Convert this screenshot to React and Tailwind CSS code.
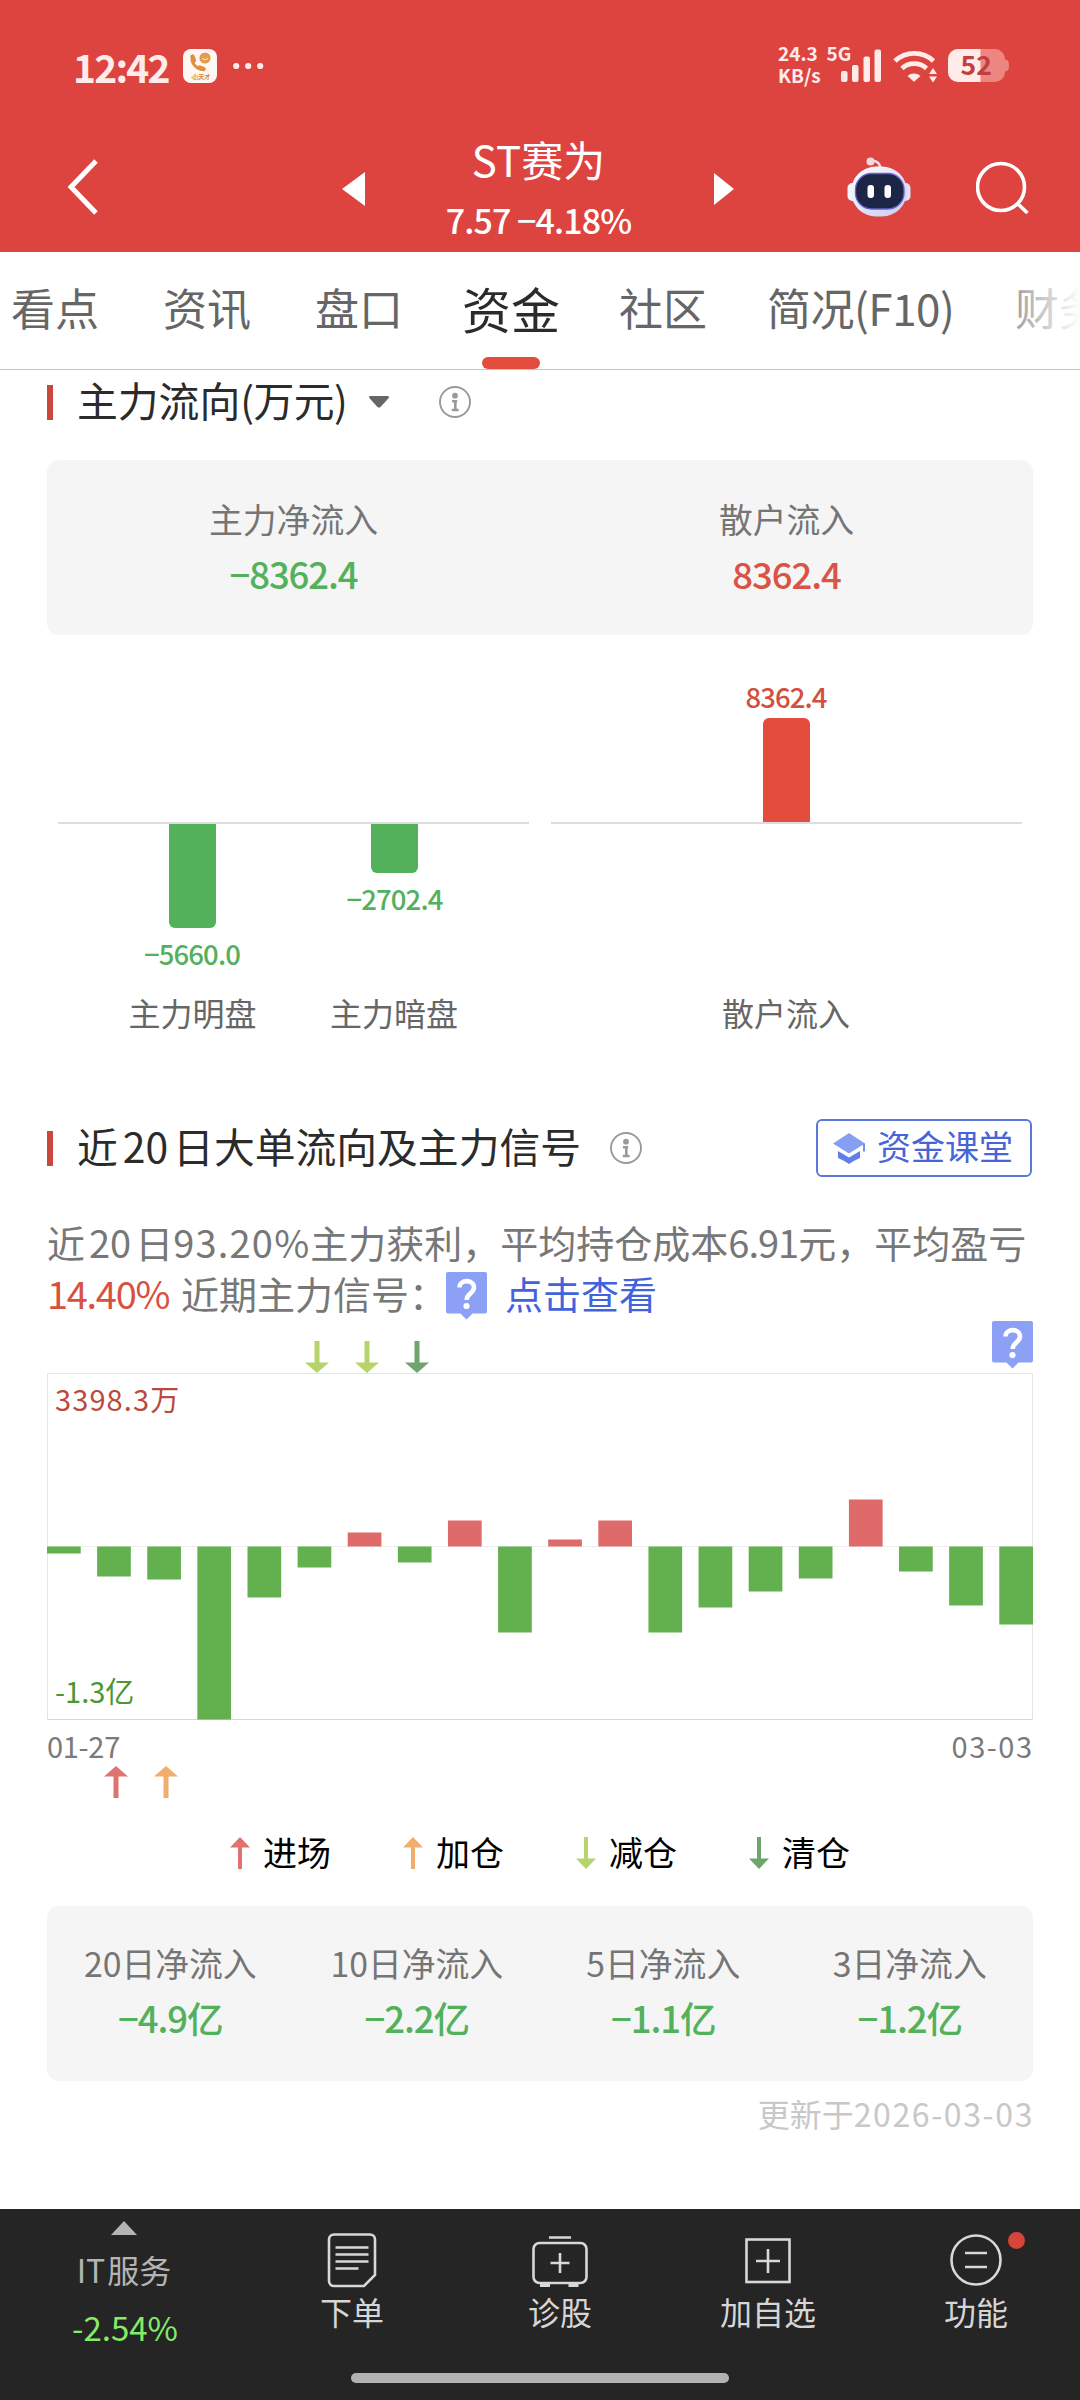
const GREEN = '#53b15c';
const RED = '#e44c3e';

const tabs = [
  { label: '看点', className: 'w-[88px]' },
  { label: '资讯', className: 'ml-16 w-[88px]' },
  { label: '盘口', className: 'ml-16 w-[88px]' },
  { label: '资金', className: 'ml-[59px] w-[98px] text-[49px] text-[#2b2b2b]' },
  { label: '社区', className: 'ml-[59px] w-[88px]' },
  { label: '简况(F10)', className: 'ml-[60px] w-[188px] tracking-[-0.5px]' },
  { label: '财务', className: 'ml-[60px] w-[88px]' },
];

// bar height in px from the zero line, positive means inflow
const dailyFlow = [-7, -30, -33, -173, -51, -21, 14, -16, 26, -86, 7, 26, -86, -61, -45, -32, 47, -25, -59, -78];

const signals = [
  { x: 317, y: 23, color: '#b7d46c', down: true },
  { x: 367, y: 23, color: '#b7d46c', down: true },
  { x: 417, y: 23, color: '#6fa56c', down: true },
  { x: 116, y: 448, color: '#e0736f' },
  { x: 166, y: 448, color: '#f0ad6c' },
];

const legend = [
  { label: '进场', color: '#e0736f' },
  { label: '加仓', color: '#f0ad6c' },
  { label: '减仓', color: '#b7d46c', down: true },
  { label: '清仓', color: '#6fa56c', down: true },
];

const periods = [
  { label: '20日净流入', value: '−4.9亿' },
  { label: '10日净流入', value: '−2.2亿' },
  { label: '5日净流入', value: '−1.1亿' },
  { label: '3日净流入', value: '−1.2亿' },
];

function StatusBar() {
  return (
    <div className="flex h-[132px] items-center pl-[73px] text-[#ffecea]">
      <span className="w-[97px] text-[39px] leading-none font-bold tracking-[-1.8px] whitespace-nowrap">12:42</span>
      <svg className="ml-[13px]" width="34" height="34" viewBox="0 0 34 34">
        <rect width="34" height="34" rx="8" fill="#fdf8f4" />
        <circle cx="22" cy="9" r="5.6" fill="#e59a4c" />
        <path d="M19 9.5q3 2.5 6 0" stroke="#fff" strokeWidth="0.8" fill="none" />
        <path d="M9.5 7.5c-2 5 3 13 11 13" stroke="#e08f40" strokeWidth="3" fill="none" strokeLinecap="round" />
        <path d="M9.5 7.5l1.4 4M16.5 18.5l4 1.5" stroke="#e08f40" strokeWidth="4.4" strokeLinecap="round" />
        <text x="9" y="29.5" fontSize="6.2" fontWeight="700" fill="#d98b3c">小天才</text>
        <path d="M8 28q4 4.5 9 1.5" stroke="#e0a060" strokeWidth="0.7" fill="none" />
      </svg>
      <svg className="ml-4" width="32" height="8" viewBox="0 0 32 8" fill="currentColor">
        <circle cx="3.2" cy="4" r="3.1" />
        <circle cx="15.2" cy="4" r="3.1" />
        <circle cx="27.2" cy="4" r="3.1" />
      </svg>
      <div className="ml-[513px] w-[47px] pb-[5px] text-[19px] leading-[22px] font-bold whitespace-nowrap">
        <div>24.3</div>
        <div>KB/s</div>
      </div>
      <svg className="overflow-visible" width="185" height="42" viewBox="825 45 185 42" fill="currentColor">
        <text x="826.5" y="61" fontSize="19" fontWeight="700">5G</text>
        <rect x="841" y="71" width="6.5" height="11" rx="2" />
        <rect x="852" y="65" width="6.5" height="17" rx="2" />
        <rect x="863.5" y="56.5" width="6.5" height="25.5" rx="2" />
        <rect x="874.5" y="49.5" width="6.5" height="32.5" rx="2" />
        <g fill="none" stroke="currentColor" strokeWidth="4.8">
          <path d="M895 61a28 28 0 0 1 38.500 0" />
          <path d="M902 68.500a18 18 0 0 1 24.500 0" />
        </g>
        <path d="M907.500 76a10 10 0 0 1 13 0l-6.500 5.800z" />
        <path d="M929 74l4-6 4 6zM929 76.500l4 6 4-6z" />
        <rect x="948" y="49" width="57" height="33" rx="10" fill="#ed8680" />
        <path d="M1004 59.500c3 0 5 1 5 6s-2 6-5 6z" fill="#ed8680" />
        <path d="M958 49h22.500v33H958a10 10 0 0 1-10-10V59a10 10 0 0 1 10-10z" />
        <text x="960.5" y="75" fontSize="26.5" fontWeight="700" fill="#c0403d">52</text>
      </svg>
    </div>
  );
}

function Robot() {
  return (
    <svg className="ml-[113px]" width="64" height="60" viewBox="0 0 64 60">
      <defs>
        <linearGradient id="shell" x1="0" y1="0" x2="1" y2="1">
          <stop offset="0" stopColor="#ffffff" />
          <stop offset="1" stopColor="#c4cbf0" />
        </linearGradient>
      </defs>
      <path d="M23 4.5c6-1.5 10 1 10.500 7" stroke="#f6dce4" strokeWidth="2.4" fill="none" />
      <circle cx="23.5" cy="4.5" r="4" fill="#f4d6de" />
      <rect x="0.5" y="26" width="11" height="18" rx="5" fill="#f4f4fc" />
      <rect x="52.5" y="26" width="11" height="18" rx="5" fill="#dfe1f6" />
      <rect x="4" y="9.5" width="56" height="50" rx="25" fill="url(#shell)" />
      <rect x="8.5" y="16.5" width="48.5" height="35.5" rx="16" fill="#1d2546" stroke="#6a5fd0" strokeWidth="1.3" />
      <rect x="20.5" y="28" width="6.5" height="13" rx="3" fill="#fff" />
      <rect x="37.5" y="28" width="6.5" height="13" rx="3" fill="#fff" />
    </svg>
  );
}

function TitleBar() {
  return (
    <div className="flex h-[110px] items-center pl-[67px] text-white">
      <svg width="31" height="56" viewBox="0 0 31 56" fill="none" stroke="currentColor" strokeWidth="5">
        <path d="M29 2L4 28l25 26" />
      </svg>
      <svg className="ml-[244px] mt-1" width="23" height="34" viewBox="0 0 23 34" fill="currentColor">
        <path d="M23 0v34L0 17z" />
      </svg>
      <div className="w-[349px] pr-0.5 text-center">
        <div className="text-[42px] leading-[54px]">ST赛为</div>
        <div className="mt-3 text-[34px] leading-[44px] font-medium tracking-[-0.9px]">7.57 −4.18%</div>
      </div>
      <svg className="mt-1" width="20" height="32" viewBox="0 0 20 32" fill="currentColor">
        <path d="M0 0v32l20-16z" />
      </svg>
      <Robot />
      <svg className="ml-[65px]" width="53" height="53" viewBox="0 0 53 53" fill="none" stroke="currentColor" strokeWidth="3.6">
        <circle cx="25" cy="26" r="23.5" />
        <path d="M41.500 42.500l10 9.500" />
      </svg>
    </div>
  );
}

function Tabs() {
  return (
    <nav className="relative flex h-[118px] items-center overflow-hidden border-b border-[#c6c4c4] pb-[7px] pl-[11px] text-[44px] leading-none text-[#666]">
      {tabs.map((tab) => (
        <div key={tab.label} className={`shrink-0 whitespace-nowrap ${tab.className}`}>
          {tab.label}
        </div>
      ))}
      <div className="absolute bottom-0 left-[482px] h-3 w-[58px] rounded-full bg-[#e44c3e]" />
      <div className="absolute top-0 right-0 h-full w-[84px] bg-linear-to-r from-white/20 to-white" />
    </nav>
  );
}

function InfoIcon({ className }) {
  return (
    <svg className={className} width="32" height="32" viewBox="0 0 32 32">
      <circle cx="16" cy="16" r="15" fill="none" stroke="#999" strokeWidth="1.9" />
      <circle cx="16" cy="9.7" r="2.9" fill="#999" />
      <path d="M13 15.2h5.200M16.300 15v9M12.800 24h6.800" stroke="#999" strokeWidth="2.6" fill="none" />
    </svg>
  );
}

function SectionTitle({ children }) {
  return (
    <>
      <div className="h-[35px] w-1.5 bg-[#c8483e]" />
      <h2 className="-mt-1 ml-6 text-[40.8px] leading-none whitespace-nowrap text-[#2b2b2b]">{children}</h2>
    </>
  );
}

function Arrow({ x = 0, y = 0, color, down, width = 24 }) {
  const h = width / 2;
  return (
    <g transform={down ? `translate(${x} ${y + 32}) scale(1 -1)` : `translate(${x} ${y})`}>
      <path d={`M0 0L${h} 10.500H${-h}z`} fill={color} />
      <rect x={width > 20 ? -2.5 : -2} y="10" width={width > 20 ? 5 : 4} height="22" fill={color} />
    </g>
  );
}

function MainFlowChart() {
  return (
    <svg className="block" width="1080" height="405" viewBox="0 635 1080 405">
      <path d="M58 823h471M551 823h471" stroke="#dcdcdc" strokeWidth="2" />
      <path d="M169 824h47v98a6 6 0 0 1-6 6h-35a6 6 0 0 1-6-6z" fill={GREEN} />
      <path d="M371 824h47v43a6 6 0 0 1-6 6h-35a6 6 0 0 1-6-6z" fill={GREEN} />
      <path d="M763 822h47v-98a6 6 0 0 0-6-6h-35a6 6 0 0 0-6 6z" fill={RED} />
      <g textAnchor="middle" fontSize="27.5" fontWeight="500" letterSpacing="-0.9">
        <text x="192" y="965" fill={GREEN}>−5660.0</text>
        <text x="394.5" y="910" fill={GREEN}>−2702.4</text>
        <text x="786" y="708" fill="#d2503f">8362.4</text>
      </g>
      <g textAnchor="middle" fontSize="32" fill="#666">
        <text x="192.5" y="1026">主力明盘</text>
        <text x="394" y="1026">主力暗盘</text>
        <text x="786" y="1026">散户流入</text>
      </g>
    </svg>
  );
}

function HelpBubble() {
  return (
    <g>
      <path d="M2 0h37a2 2 0 0 1 2 2v37.500a2 2 0 0 1-2 2H26.500l-6 6-6-6H2a2 2 0 0 1-2-2V2a2 2 0 0 1 2-2z" fill="#8ca1f6" />
      <path d="M13.500 15.500c0-8.500 14.500-8.500 14.500 0 0 5.500-7.300 6-7.300 12.500" stroke="#fff" strokeWidth="4.6" fill="none" />
      <circle cx="20.5" cy="34" r="3.1" fill="#fff" />
    </g>
  );
}

function SignalChart() {
  return (
    <svg className="block" width="1080" height="482" viewBox="0 0 1080 482">
      <path d="M47.500 401V55.500h985V401" fill="none" stroke="#e6e6e6" />
      <path d="M47 228.500h986" stroke="#eee" />
      <path d="M47 401.500h986" stroke="#d6d6d6" />
      {dailyFlow.map((v, i) => (
        <rect
          key={i}
          x={47 + i * 50.12}
          y={v > 0 ? 228.5 - v : 228.5}
          width="33.7"
          height={Math.abs(v)}
          fill={v > 0 ? '#de6b69' : '#63b04f'}
        />
      ))}
      {signals.map((s) => (
        <Arrow key={s.x} {...s} />
      ))}
      <g transform="translate(992 3)">
        <HelpBubble />
      </g>
      <g fontSize="29">
        <text x="55" y="93" fill="#ba4940" letterSpacing="1.1">3398.3万</text>
        <text x="55" y="384.5" fill="#4a9735">-1.3亿</text>
        <text x="47" y="440" fill="#7a7a7a" letterSpacing="-0.3">01-27</text>
        <text x="1033.5" y="440" fill="#7a7a7a" textAnchor="end" letterSpacing="1.5">03-03</text>
      </g>
    </svg>
  );
}

function Stat({ label, value, className = 'text-[#53b15c]' }) {
  return (
    <div className="flex-1 text-center whitespace-nowrap">
      <div className="text-[33.8px] leading-[44px] text-[#757575]">{label}</div>
      <div className={`mt-[11px] text-[36.5px] leading-[44px] font-medium tracking-[-1.1px] ${className}`}>{value}</div>
    </div>
  );
}

function NavItem({ label, children }) {
  return (
    <div className="flex w-52 flex-col items-center pt-[22px]">
      <svg width="100" height="60" viewBox="0 0 100 60" fill="none" stroke="#d8d8d8" strokeWidth="2.6">
        {children}
      </svg>
      <div className="text-[32px] leading-[40px] text-[#d6d6d6]">{label}</div>
    </div>
  );
}

function BottomNav() {
  return (
    <footer className="relative mt-auto flex h-[191px] bg-[#252525]">
      <div className="w-[248px] pt-3 text-center">
        <svg className="ml-[111px] block" width="26" height="14" viewBox="0 0 26 14">
          <path d="M13 0l13 14H0z" fill="#b4b4b4" />
        </svg>
        <div className="mt-[14px] text-[32px] leading-[40px] text-[#b4b4b4]">
          IT<span className="ml-0.5">服务</span>
        </div>
        <div className="mt-[18px] pl-0.5 text-[33px] leading-[40px] text-[#84ec66]">-2.54%</div>
      </div>
      <NavItem label="下单">
        <path d="M32 3.500h36a5 5 0 0 1 5 5V44L62 55H32a5 5 0 0 1-5-5V8.500a5 5 0 0 1 5-5z" />
        <path d="M33.500 16.500h33M33.500 23.500h33M33.500 30.500h33M33.500 37.500h23" />
      </NavItem>
      <NavItem label="诊股">
        <path d="M39 6.500h22M50 22v20M40.500 32h19" />
        <rect x="23.5" y="12" width="53" height="40" rx="6" />
        <path d="M30 54h10M58.500 54h10" strokeWidth="4" />
      </NavItem>
      <NavItem label="加自选">
        <rect x="28.5" y="8.5" width="43" height="42.5" />
        <path d="M50 18v24M38 30h24" />
      </NavItem>
      <NavItem label="功能">
        <circle cx="50" cy="29" r="24.5" />
        <path d="M39 22h22M39 36h22" />
        <circle cx="90.5" cy="9.5" r="8.5" fill="#d8433a" stroke="none" />
      </NavItem>
      <div className="absolute bottom-[17px] left-[351px] h-2.5 w-[378px] rounded-full bg-[#b2b2b2]" />
    </footer>
  );
}

export default function App() {
  return (
    <div className="flex h-[2400px] w-[1080px] flex-col overflow-hidden bg-white font-['Noto_Sans_CJK_SC',sans-serif]">
      <header className="h-[252px] bg-[#dd443f]">
        <StatusBar />
        <TitleBar />
      </header>
      <Tabs />

      <div className="flex h-16 items-center pl-[47px]">
        <SectionTitle>
          主力流向<span className="tracking-[-0.5px]">(万元)</span>
        </SectionTitle>
        <svg className="ml-[22px]" width="20" height="12" viewBox="0 0 20 12">
          <path d="M1.500 0h17q2.500 0 .8 2.500L11.500 11q-1.500 1.200-3 0L.7 2.500Q-1 0 1.500 0z" fill="#666" />
        </svg>
        <InfoIcon className="ml-[50px]" />
      </div>
      <div className="mx-[47px] mt-[26px] flex h-[175px] shrink-0 rounded-xl bg-[#f5f5f5] pt-[37px]">
        <Stat label="主力净流入" value="−8362.4" />
        <Stat label="散户流入" value="8362.4" className="text-[#da5346]" />
      </div>
      <MainFlowChart />

      <div className="mt-[79px] flex h-[58px] items-center pl-[47px]">
        <SectionTitle>
          近<span className="px-[5px]">20</span>日大单流向及主力信号
        </SectionTitle>
        <InfoIcon className="ml-[29px]" />
        <button type="button" className="mr-12 ml-auto flex h-[58px] w-[216px] items-center rounded-md border-2 border-[#5c78dc] pl-[15px] text-[34px] leading-none text-[#4765d8]">
          <svg width="33" height="31" viewBox="0 0 33 31">
            <path d="M16 0l16 10.500-16 10L0 10.500z" fill="#85a0f2" />
            <path d="M5 18l11 6.500L27 18v7q-5 2-11 6-6-4-11-6z" fill="#5f80ea" />
            <path d="M31 10.500v8" stroke="#6f8fee" strokeWidth="2" />
          </svg>
          <span className="-mt-1 ml-[11px] whitespace-nowrap">资金课堂</span>
        </button>
      </div>

      <div className="mt-[39px] h-[102px] pl-[47px] text-[38px] leading-[51px] whitespace-nowrap text-[#777]">
        <div>
          近<span className="px-1">20</span>日<span className="tracking-[1.2px]">93.20%</span>
          主力获利，平均持仓成本<span className="tracking-[-1px]">6.91</span>元，平均盈亏
        </div>
        <div className="flex">
          <span className="w-[134px] tracking-[-1.3px] text-[#d8513f]">14.40%</span>
          <span className="w-[265px]">近期主力信号：</span>
          <svg className="mt-[5px]" width="41" height="48" viewBox="0 0 41 48">
            <HelpBubble />
          </svg>
          <a className="ml-[18px] text-[#4263dc]">点击查看</a>
        </div>
      </div>
      <SignalChart />

      <div className="mt-9 flex h-[34px] items-center justify-center gap-[72px] text-[34px] leading-none text-black">
        {legend.map((item) => (
          <div key={item.label} className="flex items-center gap-[13px]">
            <svg width="20" height="32" viewBox="-10 0 20 32">
              <Arrow color={item.color} down={item.down} width={20} />
            </svg>
            <span className="-mt-0.5">{item.label}</span>
          </div>
        ))}
      </div>
      <div className="mx-[47px] mt-9 flex h-[175px] shrink-0 rounded-xl bg-[#f5f5f5] pt-[35px]">
        {periods.map((item) => (
          <Stat key={item.label} {...item} />
        ))}
      </div>
      <div className="pr-[46px] text-right text-[32px] leading-[64px] text-[#c8c8c8]">
        更新于<span className="tracking-[1.6px]">2026-03-03</span>
      </div>

      <BottomNav />
    </div>
  );
}
